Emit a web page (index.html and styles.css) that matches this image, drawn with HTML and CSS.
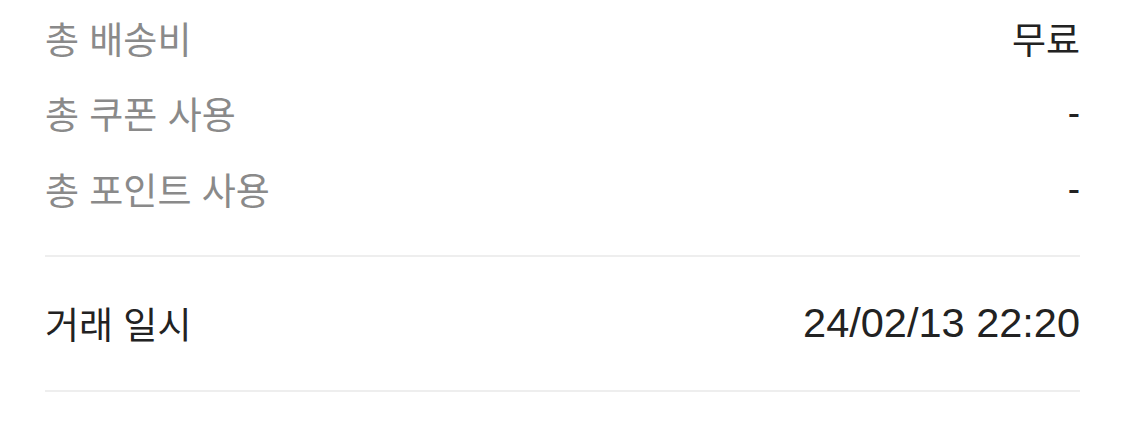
FILE: index.html
```html
<html><head><title>거래 정보</title>
<meta charset="utf-8">
<link rel="stylesheet" href="styles.css">
</head>
<body>
<div id="summary">
  <div class="row">
    <span class="label">총 배송비</span>
    <span class="value">무료</span>
  </div>
  <div class="row">
    <span class="label">총 쿠폰 사용</span>
    <span class="value">-</span>
  </div>
  <div class="row">
    <span class="label">총 포인트 사용</span>
    <span class="value">-</span>
  </div>
</div>
<div id="dealtime">
  <div class="row">
    <span class="label dark">거래 일시</span>
    <span class="value date">24/02/13 22:20</span>
  </div>
</div>
</body>
</html>
```

FILE: styles.css
```css
body {
	margin: 0; background: white; color: #222;
	font-family: "Liberation Sans", "Noto Sans CJK KR", sans-serif;
}
#summary {
	margin: 0 45px;
	padding-bottom: 28px;
	border-bottom: 2px solid #eeeeee;
}
#summary .row { height: 75.5px; }
#dealtime {
	margin: 0 45px;
	height: 133px;
	border-bottom: 2px solid #eeeeee;
	display: flex; align-items: center;
}
#dealtime .row { flex: 1; }
.row {
	display: flex; justify-content: space-between; align-items: center;
}
.label {
	font-size: 37px; color: #8a8a8a;
}
.label.dark { color: #222; }
.value { font-size: 37px; color: #222; }
.date { font-size: 41.5px; }
```
